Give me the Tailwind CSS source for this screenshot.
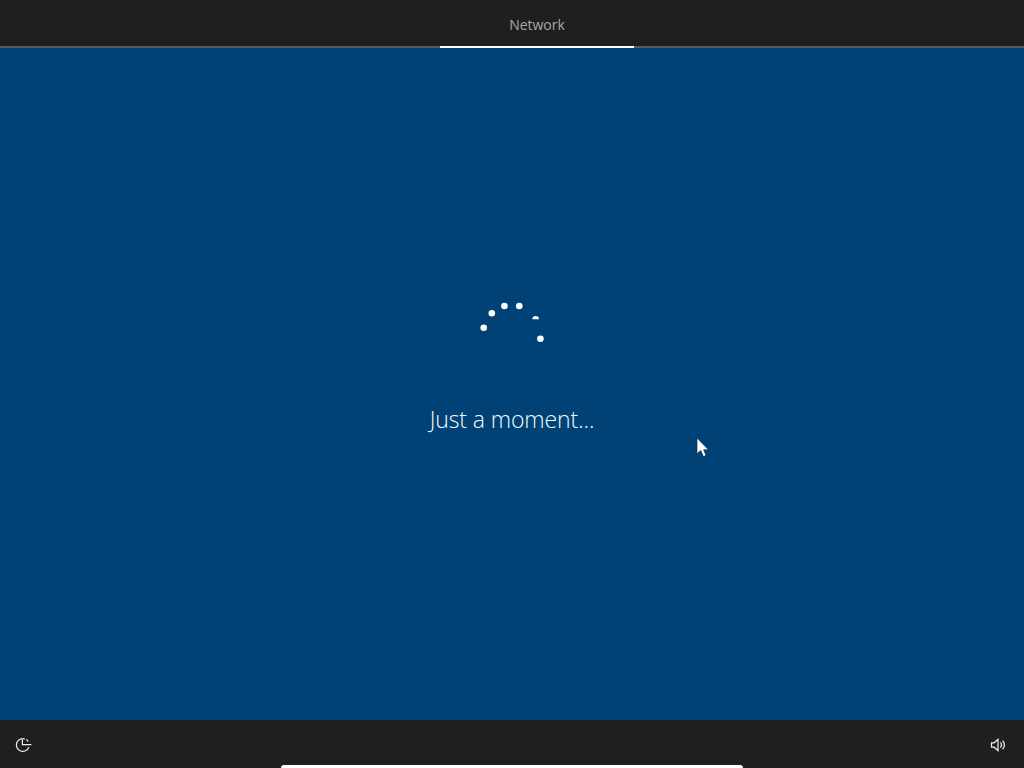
<!DOCTYPE html>
<html>
<head>
<meta charset="utf-8">
<script src="https://cdn.jsdelivr.net/npm/@tailwindcss/browser@4"></script>
</head>
<body class="m-0 overflow-hidden">
<div class="relative flex h-[768px] w-[1024px] flex-col overflow-hidden bg-[#004275] font-['Open_Sans','Noto_Sans',sans-serif]">
  <header class="flex h-[48px] shrink-0 border-b-2 border-[#5b5b5b] bg-[#1f1f1f]">
    <div class="ml-[440px] -mb-[2px] flex h-[48px] w-[194px] items-center justify-center border-b-2 border-white pt-[2px] text-[14px] text-[#a8a8a8]">Network</div>
  </header>
  <main class="flex flex-1 flex-col items-center pt-[252px]">
    <svg class="h-[50px] w-[70px]" viewBox="477 300 70 50" aria-hidden="true">
      <g fill="#ffffff">
        <circle cx="483.7" cy="327.8" r="3.3"/>
        <circle cx="491.8" cy="313.2" r="3.3"/>
        <circle cx="504.4" cy="306" r="3.3"/>
        <circle cx="519.3" cy="306" r="3.3"/>
        <path d="M532.4 319.3a3.3 3.3 0 0 1 6.6 0z"/>
        <circle cx="540.4" cy="338.8" r="3.3"/>
      </g>
    </svg>
    <p class="mt-[51px] text-[23px] leading-[36px] font-[340] tracking-[-0.1px] text-[#f2fbff]">Just a moment...</p>
  </main>
  <footer class="relative flex h-[48px] shrink-0 items-center justify-between bg-[#1f1f1f] pt-[2px] pr-[18px] pl-[15px]">
    <svg class="h-[16px] w-[17px] text-[#f0f0f0]" viewBox="0 0 17 16" fill="none" stroke="currentColor" stroke-width="1.2" aria-hidden="true">
      <path d="M13.8 10.2A6.4 6.4 0 1 1 10 2"/>
      <path d="M7.4 2.6V7.6H16.4"/>
      <path d="M11.2 2.6a6.4 6.4 0 0 1 2 2"/>
    </svg>
    <svg class="h-[16px] w-[16px] text-[#f4f4f4]" viewBox="0 0 16 16" fill="none" stroke="currentColor" stroke-width="1.2" aria-hidden="true">
      <path d="M1.5 5.8H4.2L8 2.4V13.6L4.2 10.2H1.5Z"/>
      <path d="M10.4 5.4a4 4 0 0 1 0 5.2"/>
      <path d="M12.6 3.6a7 7 0 0 1 0 8.8"/>
    </svg>
    <div class="absolute bottom-0 left-[281px] h-[3px] w-[462px] rounded-t-[6px] bg-white"></div>
  </footer>
  <svg class="absolute top-[437px] left-[696px] h-[21px] w-[13px]" viewBox="0 0 13 21" aria-hidden="true">
    <path d="M1 1V16.6L4.8 13.4L7.4 19.6L10 18.4L7.6 12.8H12.4Z" fill="#ffffff" stroke="#0b2238" stroke-width="0.6"/>
  </svg>
</div>
</body>
</html>
